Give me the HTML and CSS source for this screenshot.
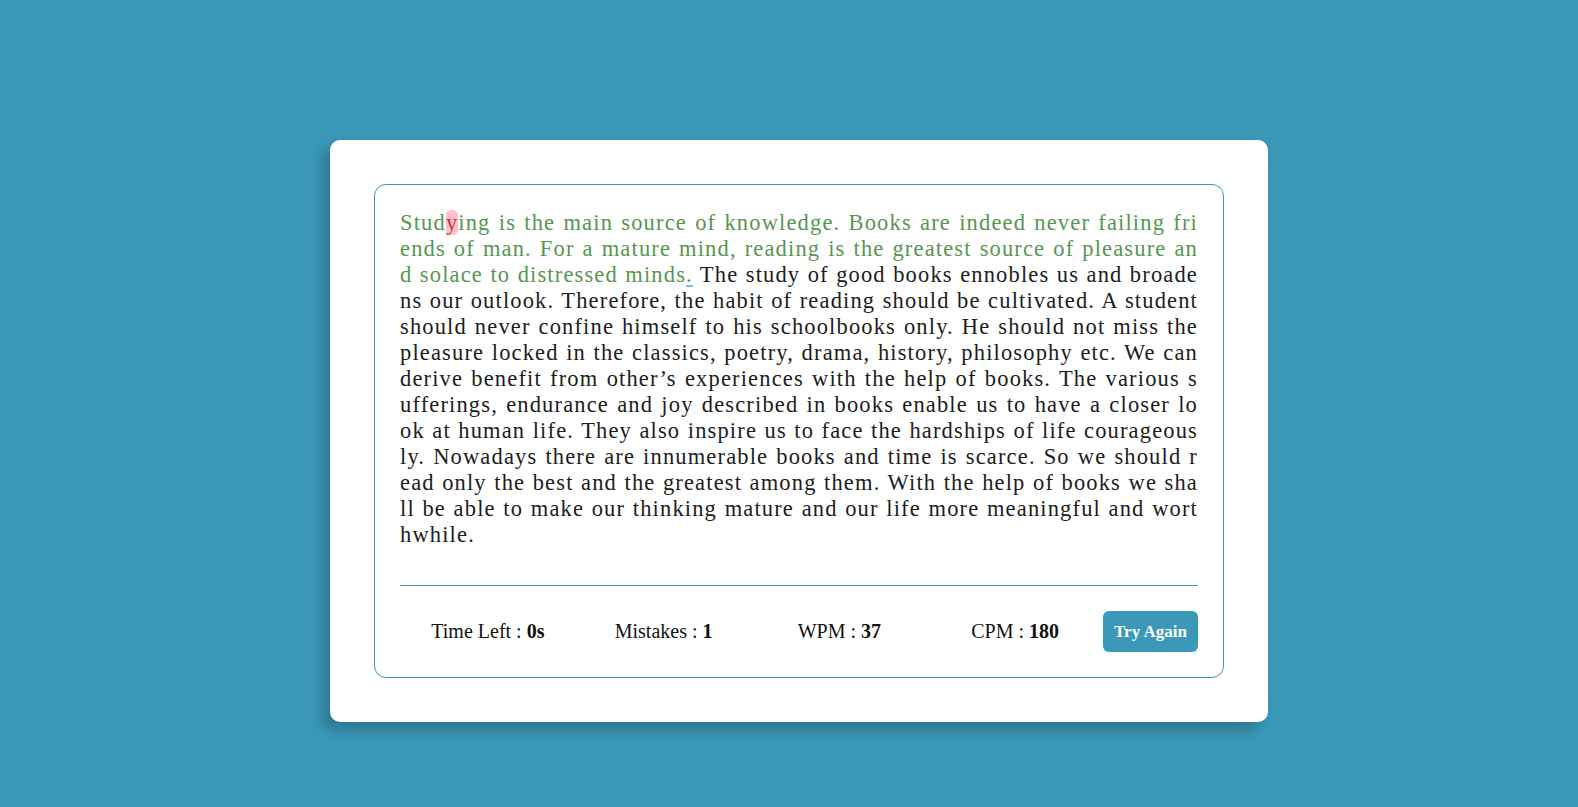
FILE: index.html
```html
<!DOCTYPE html>
<html lang="en">
<head>
<meta charset="utf-8">
<title>Typing Speed Test</title>
<link rel="stylesheet" href="styles.css">
</head>
<body>
<div class="page">
  <div class="wrapper">
    <div class="content-box">
      <div class="typing-text">
        <p>
          <span class="line"><span class="correct">Stud</span><span class="incorrect">y</span><span class="correct">ing is the main source of knowledge. Books are indeed never failing fri</span></span>
          <span class="line correct">ends of man. For a mature mind, reading is the greatest source of pleasure an</span>
          <span class="line"><span class="correct">d solace to distressed minds</span><span class="correct active">.</span> The study of good books ennobles us and broade</span>
          <span class="line">ns our outlook. Therefore, the habit of reading should be cultivated. A student</span>
          <span class="line">should never confine himself to his schoolbooks only. He should not miss the</span>
          <span class="line">pleasure locked in the classics, poetry, drama, history, philosophy etc. We can</span>
          <span class="line">derive benefit from other’s experiences with the help of books. The various s</span>
          <span class="line">ufferings, endurance and joy described in books enable us to have a closer lo</span>
          <span class="line">ok at human life. They also inspire us to face the hardships of life courageous</span>
          <span class="line">ly. Nowadays there are innumerable books and time is scarce. So we should r</span>
          <span class="line">ead only the best and the greatest among them. With the help of books we sha</span>
          <span class="line">ll be able to make our thinking mature and our life more meaningful and wort</span>
          <span class="line last">hwhile.</span>
        </p>
      </div>
      <div class="content">
        <ul class="result-details">
          <li>Time Left : <b>0s</b></li>
          <li>Mistakes : <b>1</b></li>
          <li>WPM : <b>37</b></li>
          <li>CPM : <b>180</b></li>
        </ul>
        <button class="btn">Try Again</button>
      </div>
    </div>
  </div>
</div>
</body>
</html>
```
FILE: styles.css
```css
* {
  box-sizing: border-box;
}
html, body {
  margin: 0;
  padding: 0;
}
body {
  background: #3b98b9;
  font-family: "Liberation Serif", "Times New Roman", serif;
  min-height: 807px;
}
.page {
  display: flex;
  justify-content: center;
  padding: 140px 0 0 20px;
}
.wrapper {
  width: 938px;
  padding: 44px;
  background: #fff;
  border-radius: 10px;
  box-shadow: -8px 8px 14px rgba(0, 0, 0, 0.22);
}
.content-box {
  border: 1px solid #3b98b9;
  border-radius: 12px;
  padding: 25px 25px 0;
}
.typing-text p {
  margin: 0;
  font-size: 22.5px;
  line-height: 26px;
  letter-spacing: 1.15px;
  color: #1c1c1c;
}
.typing-text .line {
  display: block;
  text-align: justify;
  text-align-last: justify;
  white-space: nowrap;
}
.typing-text .line.last {
  text-align: left;
  text-align-last: left;
}
.typing-text span {
  position: relative;
}
.typing-text .correct {
  color: #56964f;
}
.typing-text .incorrect {
  color: #cb3439;
  background: #ffc0cb;
  border-radius: 5px;
}
.typing-text .active::before {
  content: "";
  position: absolute;
  left: 0;
  bottom: 0;
  width: 100%;
  height: 2px;
  background: #6cc3dc;
}
.content {
  margin-top: 37px;
  border-top: 1px solid #3b98b9;
  padding: 25px 0;
  display: flex;
  align-items: center;
}
.result-details {
  flex: 1;
  display: flex;
  margin: 0;
  padding: 0;
  list-style: none;
}
.result-details li {
  flex: 1;
  text-align: center;
  font-size: 20px;
  color: #111;
}
.result-details b {
  font-weight: 700;
}
.btn {
  width: 95px;
  height: 41px;
  border: none;
  border-radius: 6px;
  background: #3b98b9;
  color: #fff;
  font-family: "Liberation Serif", "Times New Roman", serif;
  font-weight: 700;
  font-size: 17px;
  padding: 0;
}
```
